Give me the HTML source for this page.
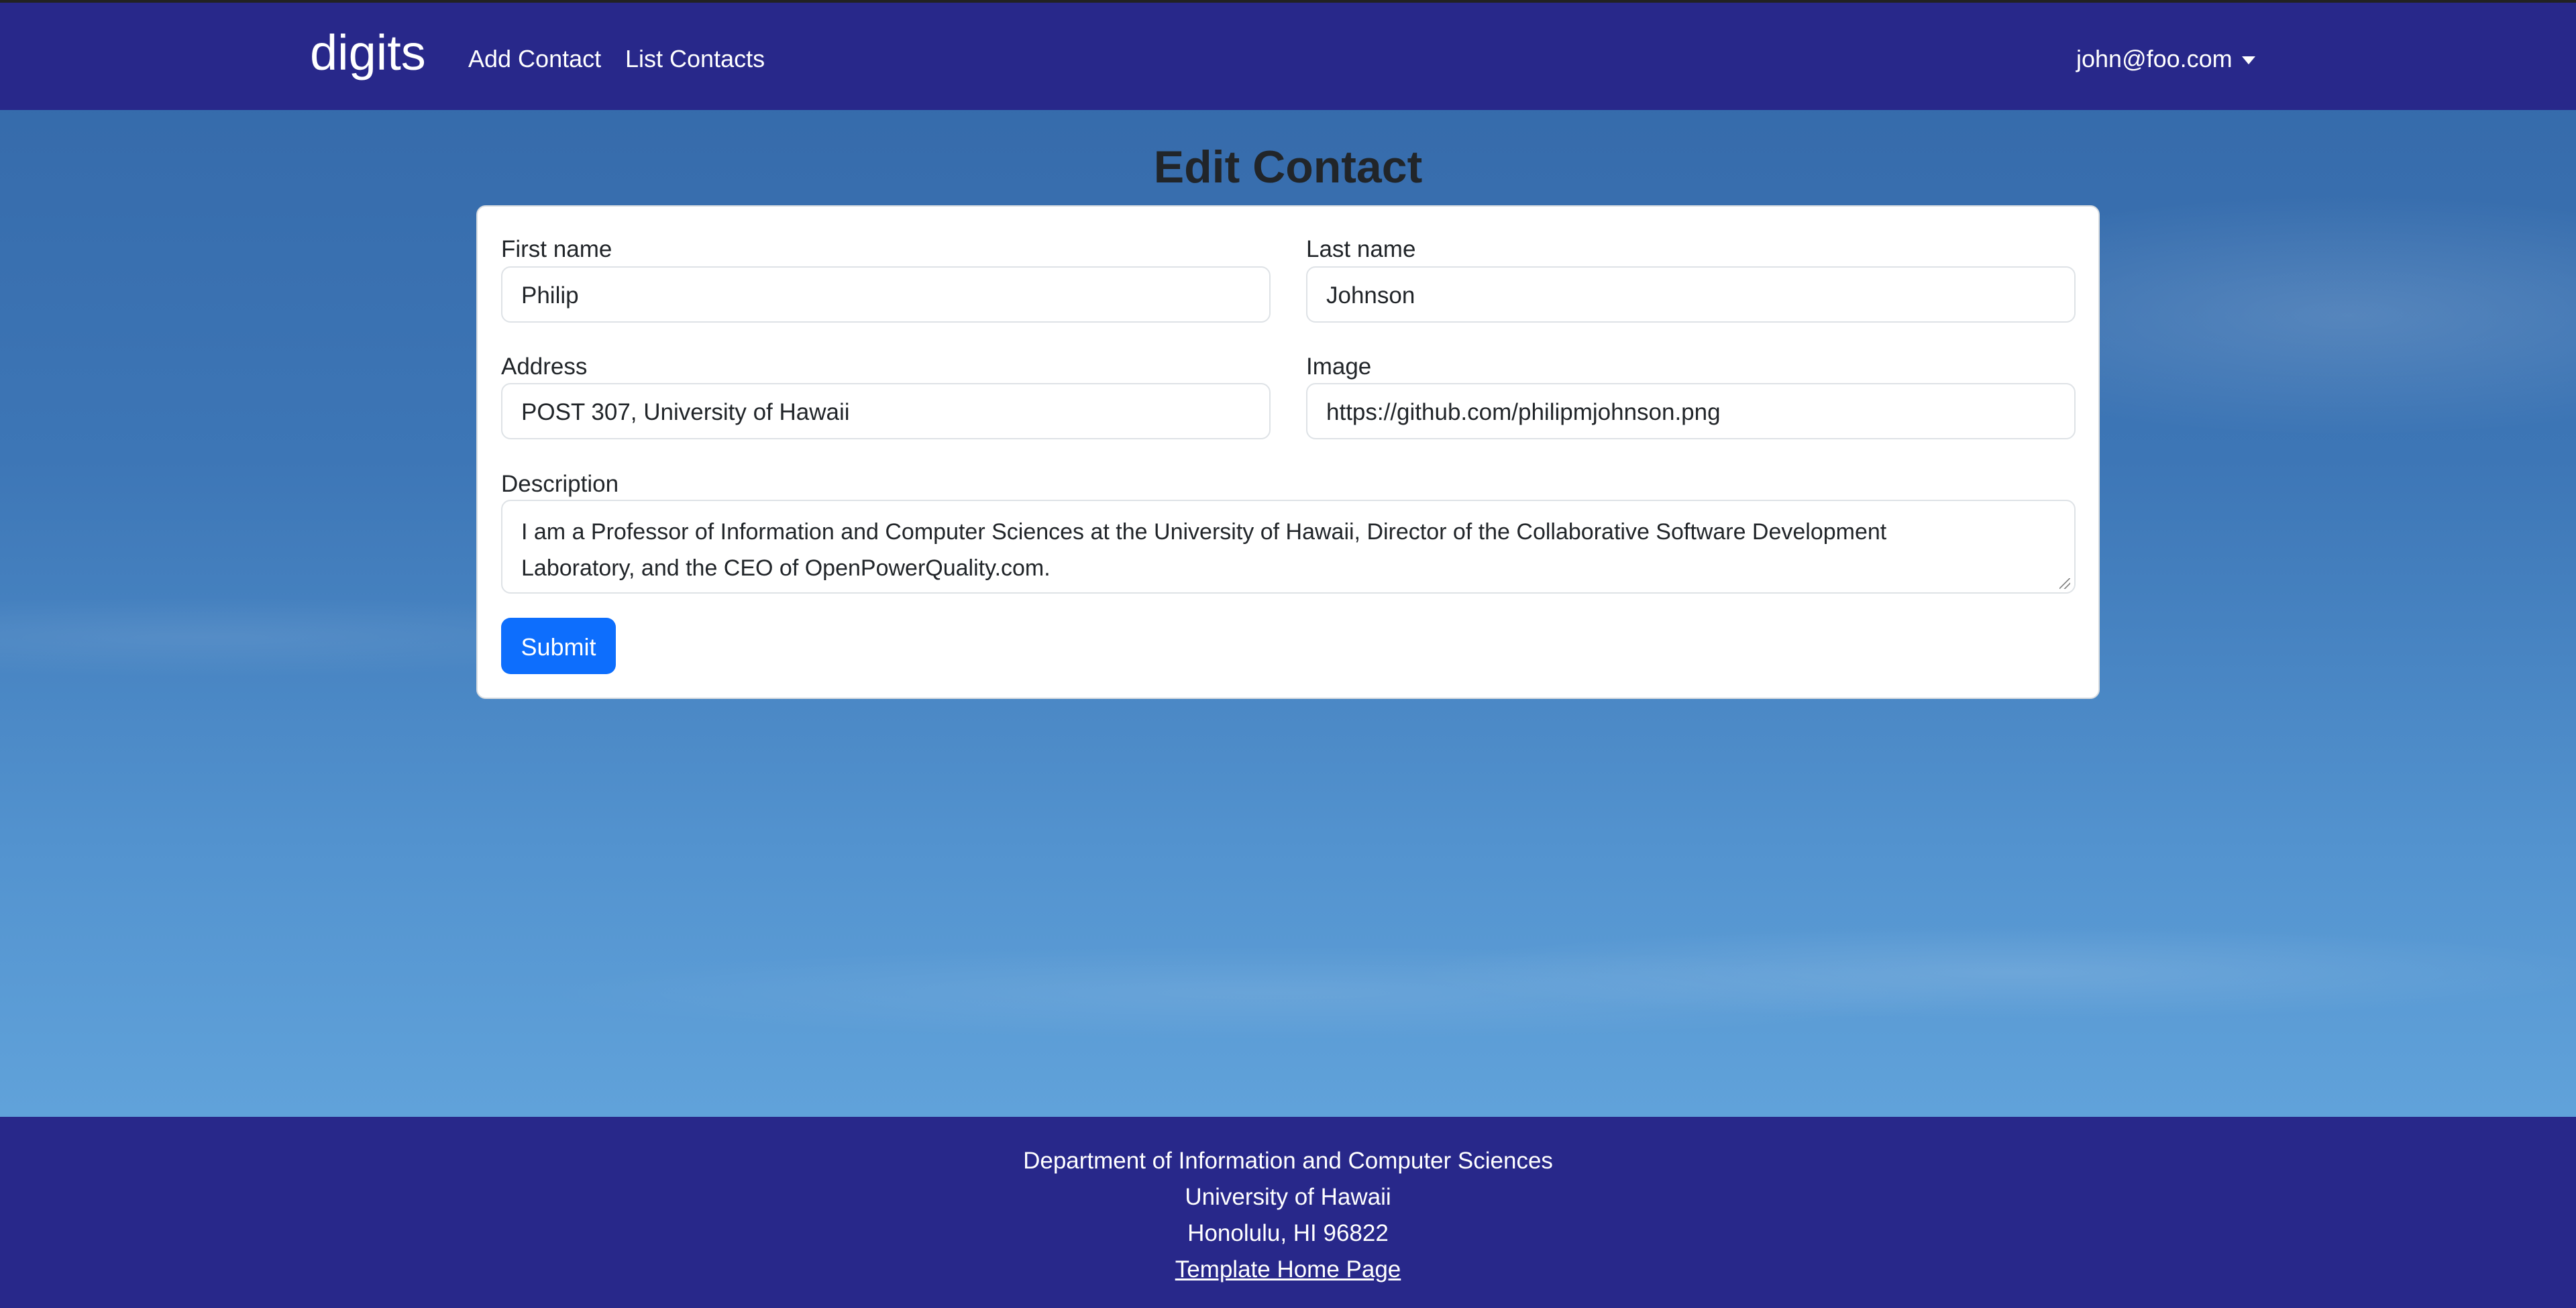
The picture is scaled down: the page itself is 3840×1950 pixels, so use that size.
<!DOCTYPE html>
<html><head><meta charset="utf-8"><style>
*{box-sizing:border-box;margin:0;padding:0}
html,body{width:3840px;height:1950px;overflow:hidden}
body{font-family:"Liberation Sans",sans-serif;position:relative;
background:
radial-gradient(ellipse 700px 180px at 3500px 470px,rgba(255,255,255,.14),transparent),
radial-gradient(ellipse 900px 70px at 3000px 1450px,rgba(255,255,255,.12),transparent),
radial-gradient(ellipse 1100px 70px at 1900px 1480px,rgba(255,255,255,.09),transparent),
radial-gradient(ellipse 800px 60px at 300px 950px,rgba(255,255,255,.08),transparent),
linear-gradient(180deg,#3468a8 0%,#3d76b6 35%,#5393cf 65%,#6aade2 100%);}
.nav{position:absolute;left:0;top:0;width:3840px;height:164px;background:#28288a;border-top:4px solid #222}
.nav span{position:absolute;color:#fff;white-space:nowrap}
.brand{left:462px;top:32px;font-size:74px}
.l1{left:698px;top:63px;font-size:36px}
.l2{left:932px;top:63px;font-size:36px}
.user{left:3095px;top:63px;font-size:36px}
.caret{position:absolute;left:3342px;top:80px;width:0;height:0;border-left:10px solid transparent;border-right:10px solid transparent;border-top:12px solid #fff}
h2{position:absolute;left:0;width:3840px;top:210px;text-align:center;font-size:68px;font-weight:bold;color:#212529}
.card{position:absolute;left:710px;top:306px;width:2420px;height:736px;background:#fff;border-radius:14px;border:2px solid #d8dce0}
.lab{position:absolute;font-size:35px;color:#212529;white-space:nowrap}
.inp{position:absolute;height:84px;border:2px solid #dee2e6;border-radius:14px;font-size:35px;color:#212529;padding:0 28px;line-height:84px;white-space:nowrap;background:#fff}
.btn{position:absolute;left:747px;top:921px;width:171px;height:84px;background:#0d6efd;border-radius:14px;color:#fff;font-size:36px;text-align:center;line-height:88px}
.foot{position:absolute;left:0;top:1665px;width:3840px;height:285px;background:#28288a;color:#fff;text-align:center;font-size:35px;line-height:54px;padding-top:39px}
.foot u{text-decoration:underline}
.grip{position:absolute;left:3070px;top:862px;width:16px;height:16px;background:linear-gradient(135deg,transparent 45%,#888 45%,#888 52%,transparent 52%,transparent 70%,#888 70%,#888 77%,transparent 77%)}
</style></head><body>
<div class="nav">
<span class="brand">digits</span>
<span class="l1">Add Contact</span>
<span class="l2">List Contacts</span>
<span class="user">john@foo.com</span>
<div class="caret"></div>
</div>
<h2>Edit Contact</h2>
<div class="card"></div>
<div class="lab" style="left:747px;top:352px">First name</div>
<div class="lab" style="left:1947px;top:352px">Last name</div>
<div class="inp" style="left:747px;top:397px;width:1147px">Philip</div>
<div class="inp" style="left:1947px;top:397px;width:1147px">Johnson</div>
<div class="lab" style="left:747px;top:527px">Address</div>
<div class="lab" style="left:1947px;top:527px">Image</div>
<div class="inp" style="left:747px;top:571px;width:1147px">POST 307, University of Hawaii</div>
<div class="inp" style="left:1947px;top:571px;width:1147px">https://github.com/philipmjohnson.png</div>
<div class="lab" style="left:747px;top:702px">Description</div>
<div class="inp" style="left:747px;top:745px;width:2347px;height:140px;line-height:54px;padding-top:19px;font-size:34px">I am a Professor of Information and Computer Sciences at the University of Hawaii, Director of the Collaborative Software Development<br>Laboratory, and the CEO of OpenPowerQuality.com.</div>
<div class="grip"></div>
<div class="btn">Submit</div>
<div class="foot">Department of Information and Computer Sciences<br>University of Hawaii<br>Honolulu, HI 96822<br><u>Template Home Page</u></div>
</body></html>
